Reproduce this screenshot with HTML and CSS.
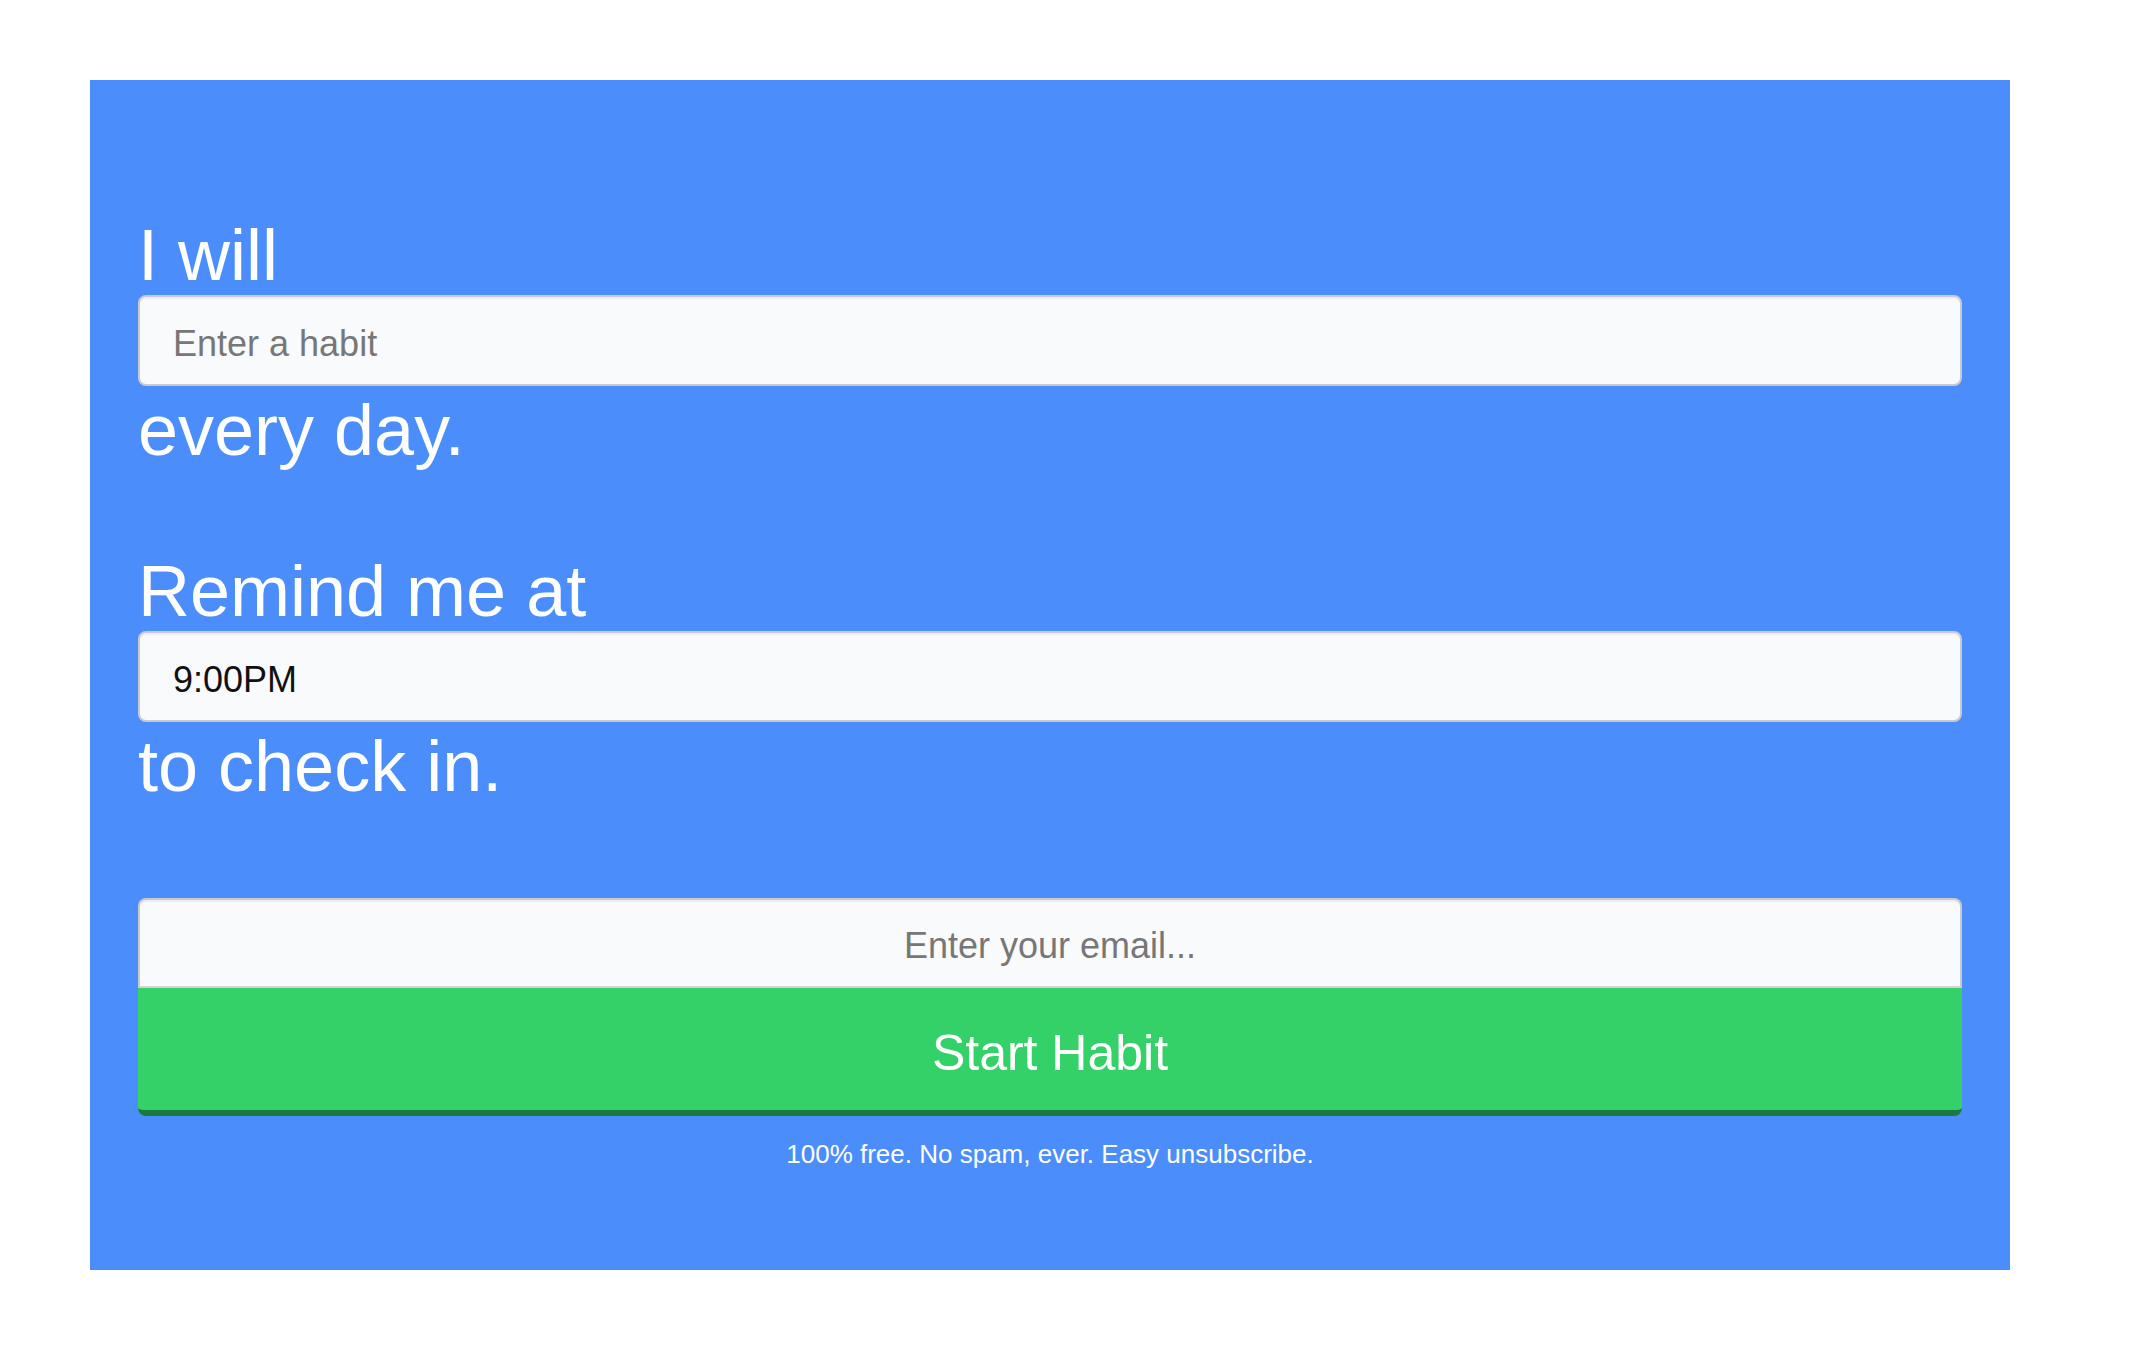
FILE: index.html
```html
<!DOCTYPE html>
<html lang="en">
<head>
  <meta charset="UTF-8">
  <meta name="viewport" content="width=device-width, initial-scale=1.0">
  <title>Start a Habit</title>
  <link rel="stylesheet" href="styles.css">
</head>
<body>

  <div class="panel">
    <form class="habit-form" onsubmit="return false;">
      <div class="sentence">
        <h1 class="line">I will</h1>
        <input type="text" class="field" placeholder="Enter a habit">
        <h1 class="line line-after">every day.</h1>
      </div>

      <div class="sentence">
        <h1 class="line">Remind me at</h1>
        <input type="text" class="field" value="9:00PM">
        <h1 class="line line-after">to check in.</h1>
      </div>

      <div class="signup">
        <input type="email" class="field email-field" placeholder="Enter your email...">
        <button type="submit" class="start-button">Start Habit</button>
        <p class="note">100% free. No spam, ever. Easy unsubscribe.</p>
      </div>
    </form>
  </div>

</body>
</html>
```

FILE: styles.css
```css
* {
  margin: 0;
  padding: 0;
  box-sizing: border-box;
}

body {
  font-family: "Liberation Sans", Arial, Helvetica, sans-serif;
  background-color: #ffffff;
}

.panel {
  width: 1920px;
  margin: 80px 0 0 90px;
  padding: 135px 48px 98px;
  background-color: #4b8efb;
  color: #ffffff;
}

.sentence + .sentence {
  margin-top: 81px;
}

.line {
  font-size: 72px;
  font-weight: normal;
  line-height: 80px;
  color: #ffffff;
}

.line-after {
  margin-top: 4px;
}

.field {
  display: block;
  width: 100%;
  height: 91px;
  padding: 6px 33px 0;
  font-family: inherit;
  font-size: 36px;
  color: #111111;
  background-color: #f9fafc;
  border: 2px solid #c9cacf;
  border-radius: 8px;
  box-shadow: inset 0 2px 1px rgba(0, 0, 0, 0.05);
  outline: none;
}

.field::placeholder {
  color: #777777;
}

.signup {
  margin-top: 92px;
}

.email-field {
  height: 90px;
  text-align: center;
  border-radius: 8px 8px 0 0;
  border-bottom: 2px solid #d3d4d8;
}

.start-button {
  display: block;
  width: 100%;
  height: 128px;
  padding-top: 8px;
  font-family: inherit;
  font-size: 50px;
  color: #ffffff;
  background-color: #34d068;
  border: none;
  border-bottom: 6px solid #1b783e;
  border-radius: 0 0 8px 8px;
  cursor: pointer;
}

.start-button:hover {
  background-color: #2fc460;
}

.note {
  margin-top: 20px;
  font-size: 26px;
  line-height: 36px;
  text-align: center;
}
```
